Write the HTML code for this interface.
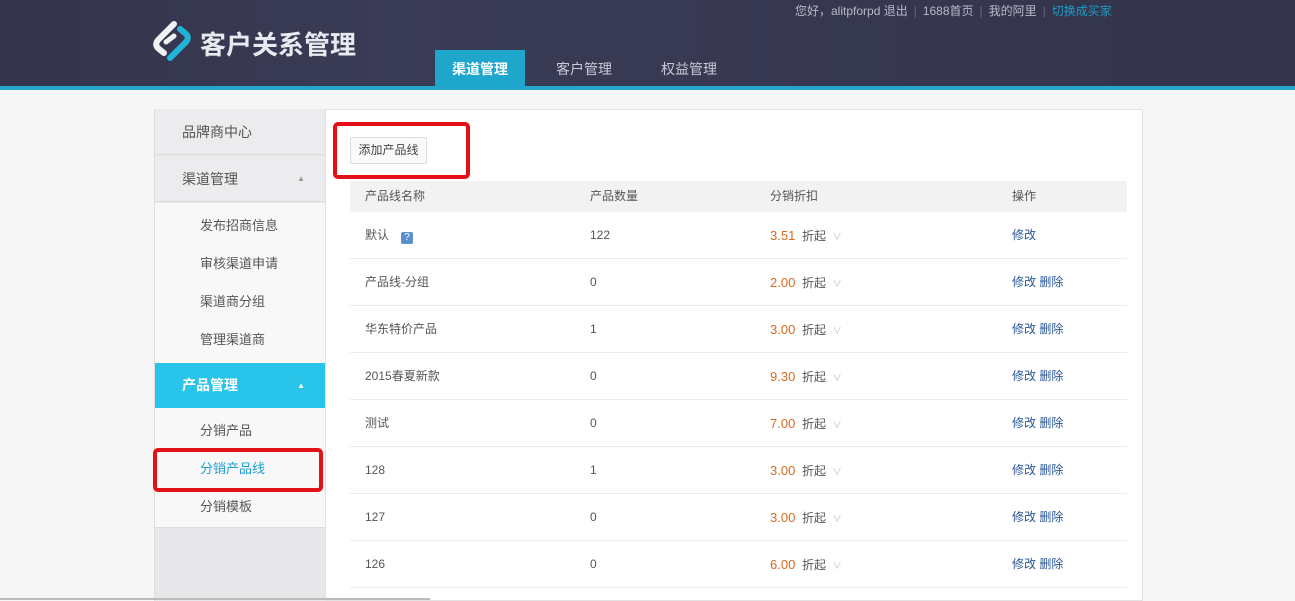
<!DOCTYPE html>
<html><head><meta charset="utf-8"><style>
*{margin:0;padding:0;box-sizing:border-box}
body{width:1295px;height:601px;overflow:hidden;background:#f6f6f7;font-family:"Liberation Sans","Noto Sans CJK SC",sans-serif;font-size:13px;color:#444;position:relative}
.hd{position:absolute;left:0;top:0;width:1295px;height:86px;background:linear-gradient(90deg,#33344b,#3a3b55 30%,#33344b)}
.bar{position:absolute;left:0;top:86px;width:1295px;height:4px;background:#22a6c9}
.top{position:absolute;top:2px;left:795px;color:#b8b9c8;font-size:12px;white-space:nowrap}
.top span.s{color:#666880;margin:0 6px}
.logo{position:absolute;left:200px;top:25px;color:#e8eaf0;font-size:26px;font-weight:bold;letter-spacing:0px}
.tab{position:absolute;top:50px;height:38px;line-height:38px;color:#c8c9d6;font-size:14px}
.tab.a{left:435px;width:90px;background:#1fa6cc;color:#fff;text-align:center;font-weight:bold}
.side{position:absolute;left:154px;top:109px;width:171px;height:492px;background:#e8e8ea;border-left:1px solid #ddd}
.si{position:absolute;left:0;width:170px;font-size:14px;color:#555;padding-left:27px}
.sub{position:absolute;left:0;width:170px;background:#f8f8f9}
.sub div{height:38px;line-height:38px;padding-left:45px;font-size:13px;color:#555}
.main{position:absolute;left:325px;top:109px;width:818px;height:492px;background:#fff;border:1px solid #e2e2e2}
.btn{position:absolute;left:350px;top:137px;width:77px;height:27px;border:1px solid #ddd;border-radius:2px;background:#fafafa;font-size:12px;line-height:25px;text-align:center;color:#444}
.th{position:absolute;left:350px;top:181px;width:777px;height:31px;background:#f2f2f3;font-size:12px;color:#555}
.row{position:absolute;left:350px;width:777px;height:47px;border-bottom:1px solid #ececec;font-size:12px;color:#555}
.c{position:absolute;top:0;line-height:47px;white-space:nowrap}
.th .c{line-height:31px}
.o{color:#d9691f;font-size:13px}
.b{color:#2a5796}
.red{position:absolute;border:4px solid #e41018;border-radius:5px}
.q{display:inline-block;width:12px;height:12px;background:#5b8fd0;color:#fff;font-size:10px;line-height:12px;text-align:center;border-radius:2px;margin-left:12px;vertical-align:-1px}
</style></head><body>
<div class="hd"></div><div class="bar"></div>
<div class="top">您好，alitpforpd 退出<span class="s">|</span>1688首页<span class="s">|</span>我的阿里<span class="s">|</span><span style="color:#1e9cc8">切换成买家</span></div>
<svg style="position:absolute;left:152px;top:20px" width="40" height="42" viewBox="0 0 40 42"><path d="M22 4 L6 20 Q2 25 7 29 L12 33" stroke="#f0f2f5" stroke-width="6" fill="none" stroke-linecap="round"/><path d="M18 38 L34 22 Q38 17 33 13 L28 9" stroke="#22b3d9" stroke-width="6" fill="none" stroke-linecap="round"/><path d="M14 22 L22 16" stroke="#f0f2f5" stroke-width="5" stroke-linecap="round"/></svg>
<div class="logo">客户关系管理</div>
<div class="tab a">渠道管理</div>
<div class="tab" style="left:556px">客户管理</div>
<div class="tab" style="left:661px">权益管理</div>

<div class="side">
<div class="si" style="top:0;height:46px;line-height:46px;background:#ececee;border-bottom:1px solid #ddd">品牌商中心</div>
<div class="si" style="top:47px;height:46px;line-height:46px;background:#ececee;border-bottom:1px solid #ddd">渠道管理<span style="position:absolute;right:20px;font-size:8px;color:#999">▲</span></div>
<div class="sub" style="top:94px;height:160px;padding-top:4px"><div>发布招商信息</div><div>审核渠道申请</div><div>渠道商分组</div><div>管理渠道商</div></div>
<div class="si" style="top:254px;height:45px;line-height:45px;background:#29c4ea;color:#fff;font-weight:bold">产品管理<span style="position:absolute;right:20px;font-size:8px">▲</span></div>
<div class="sub" style="top:299px;height:120px;padding-top:4px;border-bottom:1px solid #ddd"><div>分销产品</div><div style="color:#1ea0cf">分销产品线</div><div>分销模板</div></div>
</div>

<div class="main"></div>
<div class="btn">添加产品线</div>
<div class="th"><span class="c" style="left:15px">产品线名称</span><span class="c" style="left:240px">产品数量</span><span class="c" style="left:420px">分销折扣</span><span class="c" style="left:662px">操作</span></div>

<div class="row" style="top:212px"><span class="c" style="left:15px">默认<span class="q">?</span></span><span class="c" style="left:240px">122</span><span class="c" style="left:420px"><span class="o">3.51</span>&nbsp; 折起 &nbsp;<span style="color:#bbb;font-size:9px">∨</span></span><span class="c b" style="left:662px">修改</span></div>
<div class="row" style="top:259px"><span class="c" style="left:15px">产品线-分组</span><span class="c" style="left:240px">0</span><span class="c" style="left:420px"><span class="o">2.00</span>&nbsp; 折起 &nbsp;<span style="color:#bbb;font-size:9px">∨</span></span><span class="c b" style="left:662px">修改 删除</span></div>
<div class="row" style="top:306px"><span class="c" style="left:15px">华东特价产品</span><span class="c" style="left:240px">1</span><span class="c" style="left:420px"><span class="o">3.00</span>&nbsp; 折起 &nbsp;<span style="color:#bbb;font-size:9px">∨</span></span><span class="c b" style="left:662px">修改 删除</span></div>
<div class="row" style="top:353px"><span class="c" style="left:15px">2015春夏新款</span><span class="c" style="left:240px">0</span><span class="c" style="left:420px"><span class="o">9.30</span>&nbsp; 折起 &nbsp;<span style="color:#bbb;font-size:9px">∨</span></span><span class="c b" style="left:662px">修改 删除</span></div>
<div class="row" style="top:400px"><span class="c" style="left:15px">测试</span><span class="c" style="left:240px">0</span><span class="c" style="left:420px"><span class="o">7.00</span>&nbsp; 折起 &nbsp;<span style="color:#bbb;font-size:9px">∨</span></span><span class="c b" style="left:662px">修改 删除</span></div>
<div class="row" style="top:447px"><span class="c" style="left:15px">128</span><span class="c" style="left:240px">1</span><span class="c" style="left:420px"><span class="o">3.00</span>&nbsp; 折起 &nbsp;<span style="color:#bbb;font-size:9px">∨</span></span><span class="c b" style="left:662px">修改 删除</span></div>
<div class="row" style="top:494px"><span class="c" style="left:15px">127</span><span class="c" style="left:240px">0</span><span class="c" style="left:420px"><span class="o">3.00</span>&nbsp; 折起 &nbsp;<span style="color:#bbb;font-size:9px">∨</span></span><span class="c b" style="left:662px">修改 删除</span></div>
<div class="row" style="top:541px"><span class="c" style="left:15px">126</span><span class="c" style="left:240px">0</span><span class="c" style="left:420px"><span class="o">6.00</span>&nbsp; 折起 &nbsp;<span style="color:#bbb;font-size:9px">∨</span></span><span class="c b" style="left:662px">修改 删除</span></div>

<div class="red" style="left:333px;top:122px;width:137px;height:57px"></div>
<div class="red" style="left:153px;top:448px;width:170px;height:44px"></div>
<div style="position:absolute;left:0;top:598px;width:430px;height:2px;background:#bbb"></div>
</body></html>
